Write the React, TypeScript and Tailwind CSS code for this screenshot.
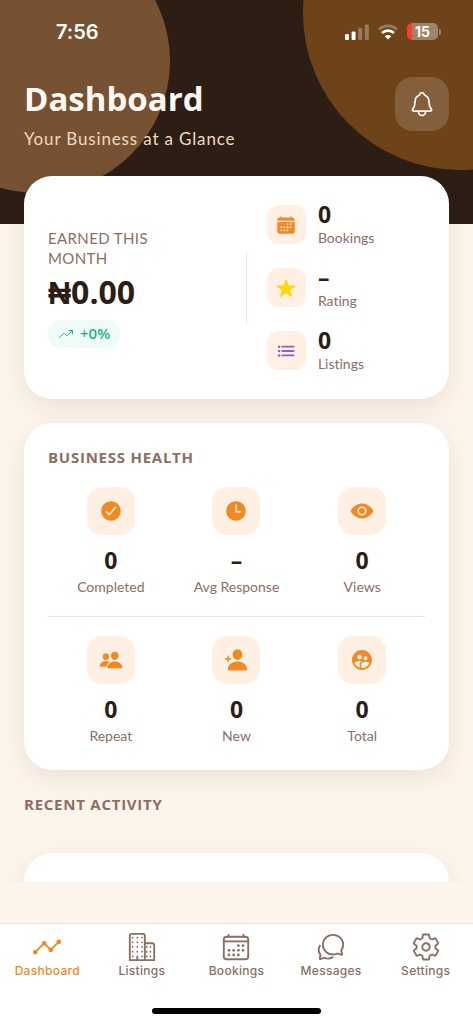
import type { IconType } from "react-icons";
import {
    IoAnalytics,
    IoBusinessOutline,
    IoCalendar,
    IoCalendarOutline,
    IoChatbubblesOutline,
    IoCheckmarkCircle,
    IoEye,
    IoList,
    IoNotificationsOutline,
    IoPeople,
    IoPersonAdd,
    IoSettingsOutline,
    IoStar,
    IoTime,
    IoTrendingUp,
} from "react-icons/io5";
import { MdSupervisedUserCircle } from "react-icons/md";

interface Stat {
    label: string;
    value: string;
    icon: IconType;
    color?: string;
}

const summary: Stat[] = [
    { label: "Bookings", value: "0", icon: IoCalendar, color: "text-[#f08a24]" },
    { label: "Rating", value: "–", icon: IoStar, color: "text-[#ffd60a]" },
    { label: "Listings", value: "0", icon: IoList, color: "text-[#8b5fd6]" },
];

const healthRows: Stat[][] = [
    [
        { label: "Completed", value: "0", icon: IoCheckmarkCircle },
        { label: "Avg Response", value: "–", icon: IoTime },
        { label: "Views", value: "0", icon: IoEye },
    ],
    [
        { label: "Repeat", value: "0", icon: IoPeople },
        { label: "New", value: "0", icon: IoPersonAdd },
        { label: "Total", value: "0", icon: MdSupervisedUserCircle },
    ],
];

const tabs = [
    { label: "Dashboard", icon: IoAnalytics, active: true },
    { label: "Listings", icon: IoBusinessOutline, active: false },
    { label: "Bookings", icon: IoCalendarOutline, active: false },
    { label: "Messages", icon: IoChatbubblesOutline, active: false },
    { label: "Settings", icon: IoSettingsOutline, active: false },
];

function StatusBar() {
    return (
        <div className="flex h-[62px] items-center justify-between pl-14 pr-8 pt-px text-white">
            <span className="font-['Inter',sans-serif] text-xl font-semibold">7:56</span>
            <div className="flex items-center gap-[9px]">
                <svg width="24" height="16" viewBox="0 0 24 16" fill="currentColor">
                    <rect x="0" y="10" width="4" height="6" rx="1.2" />
                    <rect x="6.6" y="7.4" width="4" height="8.6" rx="1.2" />
                    <rect x="13.2" y="3.8" width="4" height="12.2" rx="1.2" opacity="0.3" />
                    <rect x="19.8" y="0.4" width="4" height="15.6" rx="1.2" opacity="0.3" />
                </svg>
                <svg width="20" height="16" viewBox="0 0 20 16" fill="none" stroke="currentColor">
                    <path d="M1 5.4a13 13 0 0 1 18 0" strokeWidth="2.8" opacity="0.3" />
                    <path d="M4 9a8.6 8.6 0 0 1 12 0" strokeWidth="2.8" />
                    <path d="M10 15.6 6.8 12.3a4.6 4.6 0 0 1 6.4 0Z" fill="currentColor" stroke="none" />
                </svg>
                <div className="flex items-center gap-px">
                    <span className="flex h-[17px] w-[31px] items-center justify-center rounded-[5px] bg-linear-to-r from-[#ff3b30] from-15% to-[#a08467] to-15% font-['Inter',sans-serif] text-sm font-bold">
                        15
                    </span>
                    <span className="h-[6px] w-[2px] rounded-r-full bg-white/35" />
                </div>
            </div>
        </div>
    );
}

function Header() {
    return (
        <header className="relative h-56 overflow-hidden bg-[#2c1e15]">
            <div className="absolute -left-[94px] -top-[71px] size-[264px] rounded-full bg-[#765132]" />
            <div className="absolute -right-[144px] -top-[144px] size-[314px] rounded-full bg-[#6f431a]" />
            <div className="relative">
                <StatusBar />
                <div className="flex items-start justify-between px-6 pt-[15px]">
                    <div>
                        <h1 className="font-['Open_Sans',sans-serif] text-[33px] leading-[44px] font-bold text-[#fff8f2]">
                            Dashboard
                        </h1>
                        <p className="mt-1.5 text-[17px] leading-6 tracking-wider text-[#f0d9c2]">
                            Your Business at a Glance
                        </p>
                    </div>
                    <button
                        type="button"
                        aria-label="Notifications"
                        className="flex size-[54px] items-center justify-center rounded-[18px] bg-white/15 text-[#fff8f2]"
                    >
                        <IoNotificationsOutline className="size-7" />
                    </button>
                </div>
            </div>
        </header>
    );
}

function SummaryCard() {
    return (
        <section className="relative -mt-12 flex items-center rounded-[28px] bg-white px-6 py-[25px] shadow-[0_8px_24px_rgba(70,40,20,0.09)]">
            <div className="flex-[9]">
                <p className="max-w-[120px] text-[15px] leading-5 tracking-wide text-[#8d6e63]">EARNED THIS MONTH</p>
                <p className="mt-1 font-['Open_Sans',sans-serif] text-[32px] leading-10 font-bold">₦0.00</p>
                <span className="mt-2 flex h-7 w-fit items-center gap-1.5 rounded-full bg-[#effcf6] px-2.5 font-['Open_Sans',sans-serif] text-[15px] font-semibold text-[#1fb583]">
                    <IoTrendingUp className="size-4" />
                    +0%
                </span>
            </div>
            <div className="mx-5 h-[72px] w-px bg-[#f5e3d8]" />
            <ul className="flex flex-[8] flex-col gap-4">
                {summary.map(({ label, value, icon: Icon, color }) => (
                    <li key={label} className="flex items-center gap-3">
                        <span className={`flex size-[39px] items-center justify-center rounded-xl bg-[#fff0e3] ${color}`}>
                            <Icon className="size-5" />
                        </span>
                        <div>
                            <p className="font-['Open_Sans',sans-serif] text-[23px] leading-[26px] font-bold">{value}</p>
                            <p className="text-sm leading-[21px] text-[#8d6e63]">{label}</p>
                        </div>
                    </li>
                ))}
            </ul>
        </section>
    );
}

function HealthCard() {
    return (
        <section className="mt-6 rounded-[28px] bg-white p-6 shadow-[0_8px_24px_rgba(70,40,20,0.09)]">
            <h2 className="font-['Open_Sans',sans-serif] text-[15px] leading-5 font-bold tracking-wider text-[#8d6e63]">
                BUSINESS HEALTH
            </h2>
            <div className="mt-5 divide-y divide-[#ece2d8]">
                {healthRows.map((row, i) => (
                    <div key={i} className="grid grid-cols-3 pb-[19px] last:pt-[19px] last:pb-0">
                        {row.map(({ label, value, icon: Icon }) => (
                            <div key={label} className="flex flex-col items-center">
                                <span className="flex size-12 items-center justify-center rounded-[15px] bg-[#fff0e3] text-[#f08a24]">
                                    <Icon className="size-6" />
                                </span>
                                <p className="mt-3 font-['Open_Sans',sans-serif] text-[23px] leading-[26px] font-bold">
                                    {value}
                                </p>
                                <p className="mt-[3px] text-sm leading-[21px] text-[#8d6e63]">{label}</p>
                            </div>
                        ))}
                    </div>
                ))}
            </div>
        </section>
    );
}

function TabBar() {
    return (
        <nav className="shrink-0 border-t border-[#ebe5df] bg-white">
            <div className="grid grid-cols-5 pt-2">
                {tabs.map(({ label, icon: Icon, active }) => (
                    <a
                        key={label}
                        href={`#${label.toLowerCase()}`}
                        className={`flex flex-col items-center gap-px font-['Inter',sans-serif] text-xs font-medium tracking-wide ${active ? "text-[#f08a24]" : "text-[#8d6e63]"}`}
                    >
                        <Icon className="size-[30px]" />
                        {label}
                    </a>
                ))}
            </div>
            <div className="mx-auto mt-[29px] mb-2.5 h-1.5 w-[169px] rounded-full bg-black" />
        </nav>
    );
}

export default function App() {
    return (
        <div className="flex h-screen flex-col bg-[#fdf4eb] font-['Lato',sans-serif] text-[#2c1e15] [font-variant-ligatures:none]">
            <main className="mb-[41px] min-h-0 flex-1 overflow-hidden">
                <Header />
                <div className="px-6">
                    <SummaryCard />
                    <HealthCard />
                    <section>
                        <h2 className="mt-6 font-['Open_Sans',sans-serif] text-[15px] leading-5 font-bold tracking-wider text-[#8d6e63]">
                            RECENT ACTIVITY
                        </h2>
                        <div className="mt-[39px] h-40 rounded-[28px] bg-white shadow-[0_8px_24px_rgba(70,40,20,0.09)]" />
                    </section>
                </div>
            </main>
            <TabBar />
        </div>
    );
}
